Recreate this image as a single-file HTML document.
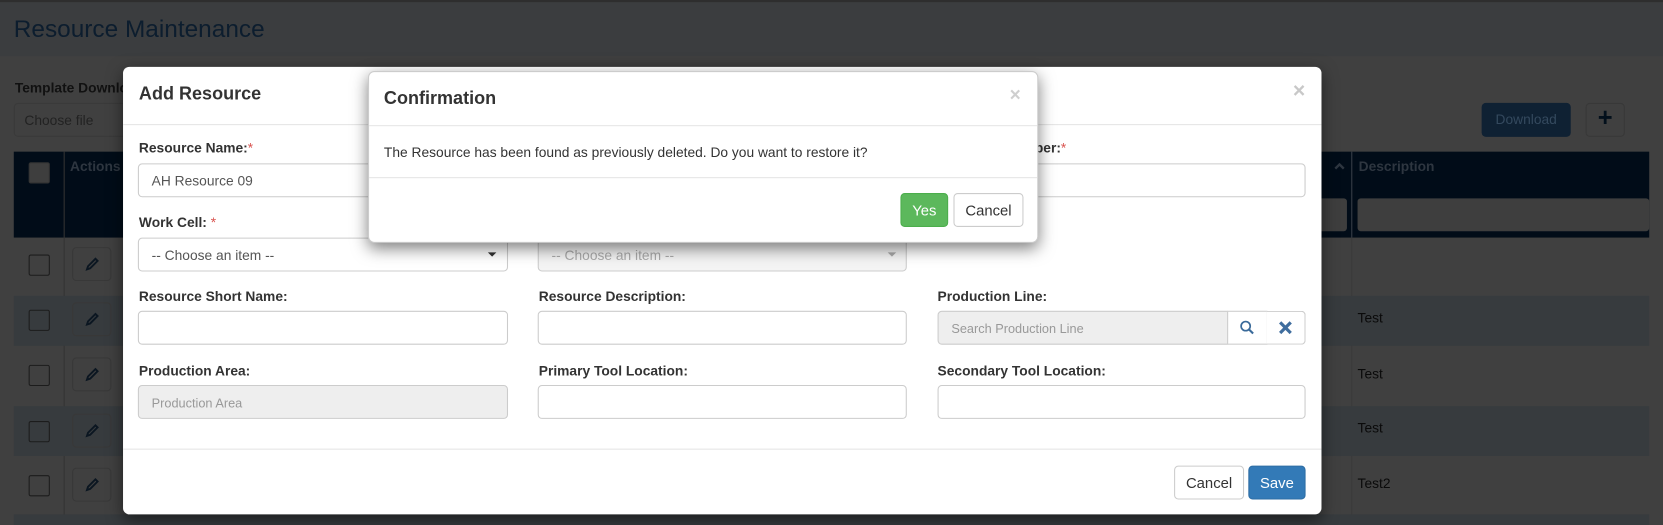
<!DOCTYPE html>
<html><head><meta charset="utf-8"><style>
html,body{margin:0;padding:0;width:1663px;height:524px;overflow:hidden;background:#404040;}
#f{position:absolute;left:0;top:0;width:1568px;height:494px;transform:scale(1.06059);transform-origin:0 0;font-family:"Liberation Sans",Arial,sans-serif;color:#333;background:#404040;}
.a{position:absolute;box-sizing:border-box;}
.lbl{position:absolute;font-size:13px;font-weight:bold;color:#333;}
.req{color:#d9534f;font-weight:normal;}
.inp{position:absolute;box-sizing:border-box;height:32px;border:1px solid #ccc;border-radius:4px;background:#fff;font-size:13px;padding:8px 12px;color:#555;}
.dis{background:#eee;color:#999;}
.chk{position:absolute;width:20px;height:20px;border:1px solid #1c1c1c;border-radius:2px;box-sizing:border-box;}
.eb{position:absolute;width:37px;height:32px;border:1px solid #383838;border-radius:4px;box-sizing:border-box;}
.caret{position:absolute;width:0;height:0;border-left:4px solid transparent;border-right:4px solid transparent;border-top:4px solid #333;}
.btn{position:absolute;box-sizing:border-box;height:32px;border-radius:4px;font-size:14px;text-align:center;line-height:30px;}
.pen{position:absolute;}
</style></head><body><div id="f">
<div class="a" style="left:0;top:0;width:1568px;height:53px;background:#3b3d3f;border-top:2px solid #2e2e2e"></div>
<div class="a" style="left:13px;top:14px;font-size:23px;color:#0c1d2e">Resource Maintenance</div>
<div class="a" style="left:14px;top:75px;font-size:13px;font-weight:bold;color:#111">Template Download</div>
<div class="a" style="left:13px;top:97px;width:140px;height:32px;border:1px solid #3a3a3a;border-radius:4px;font-size:13px;color:#222;padding:8px 9px">Choose file</div>
<div class="a" style="left:1397px;top:97px;width:84px;height:32px;background:#0f2133;border-radius:4px;font-size:13px;color:#34495e;text-align:center;line-height:32px">Download</div>
<div class="a" style="left:1495px;top:97px;width:37px;height:32px;border:1px solid #383838;border-radius:4px;color:#03101c;font-size:24px;font-weight:bold;text-align:center;line-height:28px">+</div>
<div class="a" style="left:13px;top:143px;width:1542px;height:81px;background:#010c18"></div>
<div class="a" style="left:60px;top:143px;width:1px;height:350px;background:#333"></div>
<div class="a" style="left:1274px;top:143px;width:1px;height:350px;background:#3a3a3a"></div>
<div class="a" style="left:1274px;top:143px;width:1px;height:81px;background:#2c3540"></div>
<div class="chk" style="left:27px;top:153px;background:#3e3e3e;border-color:#333"></div>
<div class="a" style="left:66px;top:149px;font-size:13px;font-weight:bold;color:#2e3640">Actions</div>
<div class="a" style="left:1281px;top:149px;font-size:13px;font-weight:bold;color:#2e3640">Description</div>
<svg class="a" style="left:1257px;top:151px" width="12" height="10" viewBox="0 0 12 10"><path d="M2 8L6 4L10 8" fill="none" stroke="#2e3640" stroke-width="2.2"/></svg>
<div class="a" style="left:1230px;top:187px;width:40px;height:31px;background:#3e3e3e;border-radius:3px"></div>
<div class="a" style="left:1280px;top:187px;width:275px;height:31px;background:#3e3e3e;border-radius:3px"></div>
<div class="a" style="left:13px;top:279px;width:1542px;height:47px;background:#373b3e"></div>
<div class="a" style="left:13px;top:383px;width:1542px;height:47px;background:#373b3e"></div>
<div class="a" style="left:13px;top:485px;width:1542px;height:10px;background:#373b3e"></div>
<div class="chk" style="left:27px;top:240px"></div><div class="eb" style="left:68px;top:233px"></div>
<div class="chk" style="left:27px;top:292px"></div><div class="eb" style="left:68px;top:285px"></div>
<div class="chk" style="left:27px;top:344px"></div><div class="eb" style="left:68px;top:337px"></div>
<div class="chk" style="left:27px;top:397px"></div><div class="eb" style="left:68px;top:390px"></div>
<div class="chk" style="left:27px;top:448px"></div><div class="eb" style="left:68px;top:441px"></div>
<svg class="pen" style="left:80px;top:242px" width="14" height="14" viewBox="0 0 14 14"><path d="M2 12L3 9L10 2L12 4L5 11Z" fill="none" stroke="#0b1621" stroke-width="1.8"/></svg>
<svg class="pen" style="left:80px;top:294px" width="14" height="14" viewBox="0 0 14 14"><path d="M2 12L3 9L10 2L12 4L5 11Z" fill="none" stroke="#0b1621" stroke-width="1.8"/></svg>
<svg class="pen" style="left:80px;top:346px" width="14" height="14" viewBox="0 0 14 14"><path d="M2 12L3 9L10 2L12 4L5 11Z" fill="none" stroke="#0b1621" stroke-width="1.8"/></svg>
<svg class="pen" style="left:80px;top:399px" width="14" height="14" viewBox="0 0 14 14"><path d="M2 12L3 9L10 2L12 4L5 11Z" fill="none" stroke="#0b1621" stroke-width="1.8"/></svg>
<svg class="pen" style="left:80px;top:450px" width="14" height="14" viewBox="0 0 14 14"><path d="M2 12L3 9L10 2L12 4L5 11Z" fill="none" stroke="#0b1621" stroke-width="1.8"/></svg>
<div class="a" style="left:1280px;top:292px;font-size:13px;color:#0a0a0a">Test</div>
<div class="a" style="left:1280px;top:345px;font-size:13px;color:#0a0a0a">Test</div>
<div class="a" style="left:1280px;top:396px;font-size:13px;color:#0a0a0a">Test</div>
<div class="a" style="left:1280px;top:448px;font-size:13px;color:#0a0a0a">Test2</div>
<div class="a" style="left:116px;top:63px;width:1130px;height:422px;background:#fff;border-radius:6px;box-shadow:0 5px 15px rgba(0,0,0,.5)"></div>
<div class="a" style="left:131px;top:79px;font-size:17px;font-weight:bold;color:#333">Add Resource</div>
<div class="a" style="left:1219px;top:75px;font-size:20px;font-weight:bold;color:#c8c8c8">×</div>
<div class="a" style="left:116px;top:117px;width:1130px;height:1px;background:#e5e5e5"></div>
<div class="lbl" style="left:131px;top:132px">Resource Name:<span class="req">*</span></div>
<div class="inp" style="left:130px;top:154px;width:349px;height:32px">AH Resource 09</div>
<div class="lbl" style="left:884px;top:132px">Resource Number:<span class="req">*</span></div>
<div class="inp" style="left:884px;top:154px;width:347px"></div>
<div class="lbl" style="left:131px;top:202px">Work Cell: <span class="req">*</span></div>
<div class="inp" style="left:130px;top:224px;width:349px">-- Choose an item --</div>
<div class="caret" style="left:460px;top:238px"></div>
<div class="inp dis" style="left:507px;top:224px;width:348px;background:#f4f4f4;color:#aaa">-- Choose an item --</div>
<div class="caret" style="left:837px;top:238px;border-top-color:#aaa"></div>
<div class="lbl" style="left:131px;top:272px">Resource Short Name:</div>
<div class="inp" style="left:130px;top:293px;width:349px"></div>
<div class="lbl" style="left:508px;top:272px">Resource Description:</div>
<div class="inp" style="left:507px;top:293px;width:348px"></div>
<div class="lbl" style="left:884px;top:272px">Production Line:</div>
<div class="inp dis" style="left:884px;top:293px;width:274px;border-radius:4px 0 0 4px;font-size:12px;padding-top:9px">Search Production Line</div>
<div class="a" style="left:1157px;top:293px;width:38px;height:32px;border:1px solid #ccc;background:#fff"></div>
<svg class="a" style="left:1168px;top:301px" width="16" height="16" viewBox="0 0 16 16"><circle cx="6.5" cy="6.5" r="4.3" fill="none" stroke="#3a6a9a" stroke-width="1.6"/><line x1="9.6" y1="9.6" x2="13.5" y2="13.5" stroke="#3a6a9a" stroke-width="2"/></svg>
<div class="a" style="left:1194px;top:293px;width:37px;height:32px;border:1px solid #ccc;border-left:none;background:#fff;border-radius:0 4px 4px 0"></div>
<svg class="a" style="left:1205px;top:302px" width="14" height="14" viewBox="0 0 14 14"><path d="M2 2L12 12M12 2L2 12" stroke="#3f6d9e" stroke-width="3"/></svg>
<div class="lbl" style="left:131px;top:342px">Production Area:</div>
<div class="inp dis" style="left:130px;top:363px;width:349px;font-size:12px;padding-top:9px">Production Area</div>
<div class="lbl" style="left:508px;top:342px">Primary Tool Location:</div>
<div class="inp" style="left:507px;top:363px;width:348px"></div>
<div class="lbl" style="left:884px;top:342px">Secondary Tool Location:</div>
<div class="inp" style="left:884px;top:363px;width:347px"></div>
<div class="a" style="left:116px;top:423px;width:1130px;height:1px;background:#e5e5e5"></div>
<div class="btn" style="left:1107px;top:439px;width:66px;border:1px solid #ccc;background:#fff;color:#333">Cancel</div>
<div class="btn" style="left:1177px;top:439px;width:54px;background:#337ab7;color:#fff;border:1px solid #2e6da4">Save</div>
<div class="a" style="left:347px;top:67px;width:632px;height:162px;background:#fff;border-radius:6px;border:1px solid #ccc;box-shadow:0 5px 15px rgba(0,0,0,.5)"></div>
<div class="a" style="left:362px;top:83px;font-size:17px;font-weight:bold;color:#333">Confirmation</div>
<div class="a" style="left:952px;top:79px;font-size:18px;font-weight:bold;color:#cfcfcf">×</div>
<div class="a" style="left:348px;top:118px;width:630px;height:1px;background:#e5e5e5"></div>
<div class="a" style="left:362px;top:136px;font-size:13px;color:#333">The Resource has been found as previously deleted. Do you want to restore it?</div>
<div class="a" style="left:348px;top:167px;width:630px;height:1px;background:#e5e5e5"></div>
<div class="btn" style="left:849px;top:182px;width:45px;background:#5cb85c;border:1px solid #4cae4c;color:#fff">Yes</div>
<div class="btn" style="left:899px;top:182px;width:66px;border:1px solid #ccc;background:#fff;color:#333">Cancel</div>
</div></body></html>
